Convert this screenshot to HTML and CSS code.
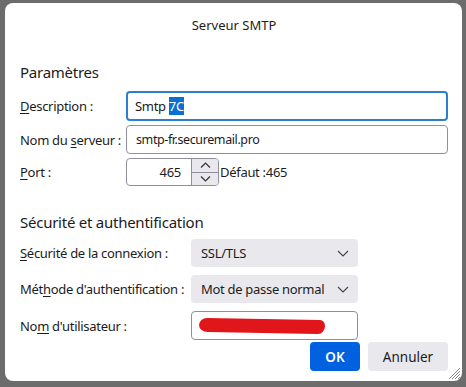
FILE: index.html
```html
<!DOCTYPE html>
<html lang="fr">
<head>
  <meta charset="UTF-8" />
  <title>Serveur SMTP</title>
  <link rel="stylesheet" href="styles.css">
</head>
<body>
  <div class="dialog">
    <div class="title">Serveur SMTP</div>

    <h2>Paramètres</h2>
    <div class="grid first">
      <label><u>D</u>escription :</label>
      <div class="field focus">Smtp <span class="sel">7C</span></div>

      <label>Nom du <u>s</u>erveur :</label>
      <div class="field host">smtp-fr.securemail.pro</div>

      <label><u>P</u>ort :</label>
      <div class="port-row">
        <div class="field port">
          <span class="num">465</span>
          <div class="spin">
            <span class="up"><svg width="11" height="6" viewBox="0 0 11 6"><path d="M1 5.5 5.5 1 10 5.5" fill="none" stroke="#333" stroke-width="1.2"/></svg></span>
            <span class="down"><svg width="11" height="6" viewBox="0 0 11 6"><path d="M1 0.5 5.5 5 10 0.5" fill="none" stroke="#333" stroke-width="1.2"/></svg></span>
          </div>
        </div>
        <span class="defaut">Défaut :465</span>
      </div>
    </div>

    <h2 class="sec">Sécurité et authentification</h2>
    <div class="grid second">
      <label><u>S</u>écurité de la connexion :</label>
      <div class="select">SSL/TLS<svg class="chev" width="12" height="7" viewBox="0 0 12 7"><path d="M1 1 6 6 11 1" fill="none" stroke="#444" stroke-width="1.1"/></svg></div>

      <label>Mét<u>h</u>ode d'authentification :</label>
      <div class="select">Mot de passe normal<svg class="chev" width="12" height="7" viewBox="0 0 12 7"><path d="M1 1 6 6 11 1" fill="none" stroke="#444" stroke-width="1.1"/></svg></div>

      <label>No<u>m</u> d'utilisateur :</label>
      <div class="field user"><span class="scribble"></span></div>
    </div>

    <div class="actions">
      <button class="ok">OK</button>
      <button>Annuler</button>
    </div>

    <svg class="grip" width="12" height="12" viewBox="0 0 12 12"><path d="M11 3 3 11M11 6 6 11M11 9 9 11M11 0 0 11" stroke="#888" stroke-width="1"/></svg>
  </div>
</body>
</html>
```

FILE: styles.css
```css
* { margin: 0; padding: 0; box-sizing: border-box; }
body {
  background: #6c6c6c;
  font-family: 'Noto Sans', sans-serif;
  color: #1c1b22;
  font-size: 13px;
  letter-spacing: -0.3px;
  width: 466px;
  height: 387px;
  overflow: hidden;
}
.dialog {
  position: relative;
  margin: 3px 4px 0 5px;
  height: 378px;
  background: #fff;
  border-radius: 8px;
  padding: 0 14px 0 15px;
}
.title {
  text-align: center;
  font-size: 13px;
  letter-spacing: 0;
  padding-top: 13px;
  height: 50px;
}
h2 {
  font-weight: normal;
  font-size: 15px;
  letter-spacing: -0.25px;
  height: 38px;
  line-height: 38px;
}
h2.sec { margin-top: 20px; height: 33px; line-height: 33px; }
.grid {
  display: grid;
  align-items: center;
}
.grid label { white-space: nowrap; }
.first {
  grid-template-columns: 106px 1fr;
  row-gap: 4px;
}
.second {
  grid-template-columns: 171px 167px;
  row-gap: 8px;
}
label u { text-underline-offset: 2px; }
.field {
  height: 29px;
  border: 1px solid #8f8f9d;
  border-radius: 4px;
  padding-left: 9px;
  display: flex;
  align-items: center;
  background: #fff;
}
.field.focus {
  height: 30px;
  border: 2px solid #2b7fd0;
  padding-left: 7px;
}
.field.host { font-size: 12.5px; letter-spacing: -0.4px; }
.sel { background: #0a6fd0; color: #fff; margin-left: 3px; }
.port-row { display: flex; align-items: center; height: 28px; }
.field.port {
  width: 93px;
  height: 28px;
  padding: 0;
  overflow: hidden;
}
.num { flex: 1; text-align: right; padding-right: 10px; }
.spin {
  width: 27px;
  height: 100%;
  display: flex;
  flex-direction: column;
  border-left: 1px solid #8f8f9d;
}
.spin span {
  flex: 1;
  background: #e9e9ed;
  display: flex;
  align-items: center;
  justify-content: center;
}
.spin .up { border-bottom: 1px solid #8f8f9d; }
.defaut { margin-left: 1px; }
.select {
  height: 28px;
  background: #e9e9ed;
  border-radius: 4px;
  padding: 0 10px;
  display: flex;
  align-items: center;
  justify-content: space-between;
}
.chev { margin-right: -1px; }
.field.user { height: 29px; }
.scribble {
  display: block;
  width: 126px;
  height: 14px;
  background: #e0161a;
  border-radius: 8px 5px 7px 9px / 7px 6px 8px 7px;
  margin-left: -2px;
  margin-top: 1px;
  transform: rotate(1deg);
}
.actions {
  display: flex;
  justify-content: flex-end;
  gap: 8px;
  margin-top: 2px;
}
.actions button {
  font-family: inherit;
  font-size: 13.5px;
  color: #1c1b22;
  border: none;
  border-radius: 4px;
  background: #e9e9ed;
  height: 29px;
  width: 80px;
}
.actions .ok {
  width: 50px;
  background: #0061e0;
  color: #fff;
  font-weight: 600;
}
.grip { position: absolute; right: 1px; bottom: 1px; }
```
